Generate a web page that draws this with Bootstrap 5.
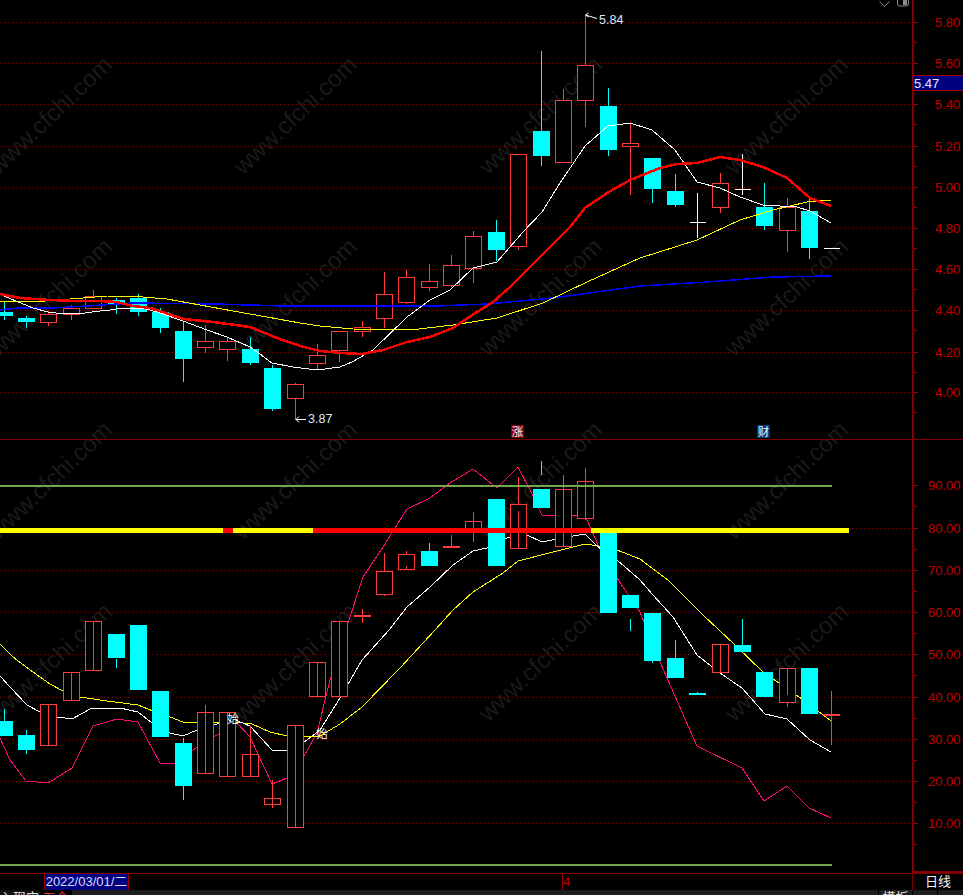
<!DOCTYPE html>
<html lang="zh">
<head>
<meta charset="utf-8">
<title>K线图</title>
<link rel="stylesheet" href="https://cdn.jsdelivr.net/npm/bootstrap@5.3.0/dist/css/bootstrap.min.css">
<style>
html,body{background:#000;margin:0;height:100%;overflow:hidden;font-family:"Liberation Sans","Noto Sans CJK SC",sans-serif}
.kpage{width:963px;height:895px}
.kmain{height:873px}
.kplot{width:912px;height:873px;display:block}
.kaxis{width:51px;height:873px;display:block}
.kplot text,.kaxis text{font-family:"Liberation Sans","Noto Sans CJK SC",sans-serif}
.wm{font-size:24px;fill:#1a1a1a}
.axl{font-size:13px;fill:#c00000}
.note{font-size:12.5px;fill:#dfe9f5}
.tag{font-size:11.5px;fill:#fff}
.kdate{height:17px;border-top:1px solid #800000;font-size:13px;line-height:15px}
.kstamp{margin-left:44px;width:85px;background:#000080;color:#d8def8;border-left:1px solid #a00000;border-right:1px solid #a00000;text-align:center;white-space:nowrap}
.kfour{margin-left:433px;width:350px;border-left:1px solid #a00000;color:#c00000;padding-left:0}
.kperiod{width:51px;border-left:1px solid #800000;color:#f2f6ff;text-align:center}
.ktabs{height:5px;background:#1e1e1e;font-size:13px;line-height:15px;color:#e6e6e6}
.ktab{padding-top:0;white-space:nowrap;height:5px;overflow:hidden}
.ktab-a{width:38px;background:#111;text-align:right}
.ktab-b{width:33px;background:#000;color:#e03030;text-align:center;margin-left:1px}
.ktab-c{margin-left:806px;width:35px;text-align:center;border-left:1px solid #000;border-right:1px solid #000}
.ktab-d{width:25px;border-right:1px solid #000}
</style>
</head>
<body>
<div class="kpage d-flex flex-column overflow-hidden">
  <div class="kmain d-flex">
    <svg class="kplot flex-shrink-0" id="plot" width="912" height="873" viewBox="0 0 912 873" xmlns="http://www.w3.org/2000/svg"></svg>
    <svg class="kaxis flex-shrink-0" id="axis" width="51" height="873" viewBox="912 0 51 873" xmlns="http://www.w3.org/2000/svg"></svg>
  </div>
  <div class="kdate d-flex">
    <div class="kstamp">2022/03/01/二</div>
    <div class="kfour">4</div>
    <div class="kperiod">日线</div>
  </div>
  <div class="ktabs d-flex">
    <div class="ktab ktab-a">入现实</div>
    <div class="ktab ktab-b">工仓</div>
    <div class="ktab ktab-c">模板</div>
    <div class="ktab ktab-d"></div>
  </div>
</div>
<script src="https://cdn.jsdelivr.net/npm/bootstrap@5.3.0/dist/js/bootstrap.bundle.min.js"></script>
<script>
var XS=[4,26,48,71,93,116,138,160,183,205,227,250,272,295,317,339,362,384,406,429,451,473,496,518,541,563,585,608,630,652,675,697,720,742,764,787,809,831];
var X=function(i){return XS[i]+0.5};
var RED='#ff3c3c',CY='#00ffff';
var out=[];
function ln(x1,y1,x2,y2,c,w,extra){out.push('<line x1="'+x1+'" y1="'+y1+'" x2="'+x2+'" y2="'+y2+'" stroke="'+c+'" stroke-width="'+(w||1)+'" shape-rendering="crispEdges" '+(extra||'')+'/>')}
function rc(x,y,w,h,f,s){out.push('<rect x="'+x+'" y="'+y+'" width="'+w+'" height="'+h+'" fill="'+f+'"'+(s?' stroke="'+s+'"':'')+' shape-rendering="crispEdges"/>')}
function poly(p,c,w){out.push('<polyline fill="none" stroke="'+c+'" stroke-width="'+w+'" stroke-linejoin="round" shape-rendering="crispEdges" points="'+p.map(function(a){return a.join(',')}).join(' ')+'"/>')}
function candle(d){var i=d[0],t=d[1],x=X(i),top=d[2],bot=d[3],segs=d.slice(4);
 var wc=(t==='c')?CY:(t==='d'?'#fff':RED);
 if(t==='c'){rc(x-8.5,top,17,bot-top,CY)}
 else if(t==='u'){rc(x-8,top+.5,16,bot-top-1,'#000',RED)}
 else if(t==='d'){ln(x-8,top+.5,x+8,top+.5,'#fff',1)}
 else if(t==='r'){rc(x-8.5,top,17,2,RED)}
 segs.forEach(function(s){ln(x,s[0],x,s[1],wc,1)});
}
/* watermark */
var rows=[115,297,480,662],cols=[50,295,540,786];
rows.forEach(function(y){cols.forEach(function(x){out.push('<text class="wm" text-anchor="middle" dominant-baseline="central" transform="translate('+x+' '+y+') rotate(-43.5)">www.cfchi.com</text>')})});
/* grid */
var DOT='stroke-dasharray="1 3"';
[22,63,104,146,187,228,269,310,352,392].forEach(function(y){ln(0,y+.5,912,y+.5,'#8c0000',1,DOT)});
[528,570,612,654,697,739,781,823].forEach(function(y){ln(0,y+.5,912,y+.5,'#8c0000',1,DOT)});
/* upper candles */
[
[0,'c',312,316,[302,312],[316,320]],[1,'c',318,322,[316,318],[322,328]],[2,'u',314,323,[311,314],[323,326]],
[3,'u',308,315,[305,308],[315,320]],[4,'u',296,309,[290,296]],[5,'c',300,304,[298,300],[304,314]],
[6,'c',298,312,[294,298],[312,316]],[7,'c',312,328,[308,312],[328,333]],[8,'c',331,359,[322,331],[359,382]],
[9,'u',341,348,[325,341],[348,353]],[10,'u',341,350,[338,341],[350,361]],[11,'c',349,363,[337,349],[363,365]],
[12,'c',368,409,[365,368],[409,411]],[13,'u',384,399,[383,384],[399,420]],[14,'u',355,364,[344,355],[364,370]],
[15,'u',331,351,[351,362]],[16,'u',327,332,[321,327],[332,337]],[17,'u',294,319,[272,294],[319,328]],
[18,'u',277,303,[270,277],[303,304]],[19,'u',281,288,[264,281],[288,291]],[20,'u',265,286,[255,265],[286,287]],
[21,'u',236,269,[231,236],[269,283]],[22,'c',232,250,[220,232],[250,261]],[23,'u',154,247,[247,250]],
[24,'c',131,156,[51,131],[156,166]],[25,'u',100,163,[89,100]],[26,'u',65,101,[15,65],[101,127]],
[27,'c',106,150,[88,106],[150,156]],[28,'u',143,147,[122,143],[147,195]],[29,'c',158,189,[189,203]],
[30,'c',191,205,[174,191],[205,207]],[31,'d',222,0,[193,238]],[32,'u',183,208,[173,183],[208,213]],
[33,'d',189,0,[154,195]],[34,'c',207,226,[183,207],[226,230]],[35,'u',207,231,[198,207],[231,252]],
[36,'c',211,248,[198,211],[248,259]],[37,'d',248,0]
].forEach(candle);
/* upper averages */
poly([[0,310],[17,308],[53,308],[87,306],[133,303],[217,304],[283,306],[320,306],[437,306],[487,304],[553,298],[640,286],[707,282],[773,277],[831,276]],'#0000ff',1.5);
poly([[0,301],[33,302],[83,298],[107,296],[143,297],[167,299],[200,305],[233,311],[267,317],[300,323],[320,326],[353,329],[410,330],[453,325],[497,318],[543,303],[587,282],[640,258],[697,240],[740,220],[773,210],[807,202],[831,200]],'#ffff00',1);
poly([[0,294],[11,299],[33,308],[48,312],[63,314],[85,313],[100,311],[110,310],[123,308],[143,308],[160,313],[183,321],[207,330],[227,337],[250,347],[260,354],[272,363],[293,367],[317,370],[340,367],[352,362],[373,350],[407,317],[430,300],[450,290],[473,268],[497,262],[523,232],[542,212],[560,183],[585,146],[608,126],[630,123],[652,130],[675,150],[697,182],[720,188],[740,197],[763,205],[797,207],[810,211],[831,223]],'#ffffff',1);
poly([[0,294],[20,298],[50,300],[77,301],[100,301],[117,302],[133,306],[150,308],[163,312],[183,319],[213,322],[250,327],[277,338],[300,346],[320,351],[340,353],[362,354],[383,350],[407,342],[430,337],[453,328],[477,312],[493,302],[510,287],[530,267],[550,247],[570,227],[585,208],[607,193],[630,180],[660,168],[677,164],[697,163],[720,157],[740,160],[763,167],[787,178],[810,198],[831,206]],'#ff0000',2.5);
/* lower averages */
poly([[0,738],[10,760],[26,781],[48,783],[72,768],[93,726],[117,719],[138,722],[160,763],[175,764],[197,747],[237,723],[250,737],[272,784],[287,778],[304,756],[317,733],[330,680],[348,623],[363,577],[383,547],[407,509],[430,498],[450,483],[473,469],[497,488],[518,467],[530,490],[542,515],[577,515],[587,520],[599,547],[617,578],[640,612],[660,662],[678,703],[697,746],[742,768],[764,801],[787,786],[809,808],[831,818]],'#ff0a78',1);
poly([[0,644],[13,657],[33,672],[50,684],[63,691],[80,697],[107,701],[138,705],[153,711],[170,717],[183,722],[213,723],[233,722],[252,724],[270,732],[287,736],[303,737],[320,736],[340,724],[362,707],[400,668],[435,630],[453,610],[473,592],[503,573],[518,561],[553,552],[585,544],[598,546],[617,550],[640,559],[668,580],[703,615],[735,645],[763,672],[802,699],[831,721]],'#ffff00',1);
poly([[0,676],[10,687],[27,705],[40,712],[57,717],[72,719],[92,708],[120,708],[138,712],[152,723],[170,733],[183,736],[197,730],[233,719],[250,726],[272,750],[287,750],[303,743],[320,730],[340,698],[362,660],[389,630],[407,607],[430,587],[453,565],[473,551],[487,548],[507,538],[527,535],[542,542],[557,539],[573,536],[585,534],[598,547],[617,560],[640,580],[653,595],[673,617],[697,655],[720,673],[742,688],[765,714],[787,719],[810,740],[831,752]],'#ffffff',1);
/* lower candles */
[
[0,'c',721,736,[709,721]],[1,'c',735,750,[730,735],[750,754]],[2,'u',704,746,[704,746]],[3,'u',672,701,[672,701]],
[4,'u',621,671,[621,671]],[5,'c',634,658,[659,668]],[6,'c',625,690],[7,'c',691,737],[8,'c',743,786,[738,743],[786,800]],
[9,'u',712,774,[705,774]],[10,'u',712,777,[712,777]],[11,'u',754,777,[726,777]],[12,'u',798,805,[780,808]],
[13,'u',725,828,[725,828]],[14,'u',662,697,[662,697]],[15,'u',621,697,[621,697]],[16,'r',615,0,[609,623]],
[17,'u',571,595,[553,571],[595,596]],[18,'u',554,570,[551,554],[566,570]],[19,'c',551,566,[543,551]],[20,'r',546,0,[535,547]],
[21,'u',521,532,[512,542]],[22,'c',499,566],[23,'u',504,549,[477,504],[511,549]],[24,'c',489,508,[461,475]],
[25,'u',489,547,[475,547]],[26,'u',481,519,[468,519]],[27,'c',530,613],[28,'c',595,608,[619,631]],
[29,'c',613,661,[661,663]],[30,'c',658,678,[640,658]],[31,'c',693,695,[692,693]],[32,'u',644,673,[644,673]],
[33,'c',645,652,[619,645]],[34,'c',672,697],[35,'u',668,703,[668,695],[703,707]],[36,'c',668,714],[37,'r',714,0,[691,745]]
].forEach(candle);
/* limit lines */
rc(0,485,832,2,'#70a850');rc(0,864,832,2,'#70a850');
/* status bar */
rc(0,528,223,5,'#ffff00');rc(223,528,10,5,'#ff0000');rc(233,528,80,5,'#ffff00');rc(313,528,278,5,'#ff0000');rc(591,528,258,5,'#ffff00');
/* panel divider */
ln(0,439.5,912,439.5,'#800000',1);
/* tags */
rc(511,425,13,13,'#800000');rc(757,425,13,13,'#003a70');
out.push('<text class="tag" x="517.5" y="436" text-anchor="middle">涨</text><text class="tag" x="763.5" y="436" text-anchor="middle">财</text>');
out.push('<text class="tag" x="233" y="723" text-anchor="middle">始</text><text class="tag" x="322" y="738" text-anchor="middle">始</text>');
/* extreme price notes */
out.push('<path d="M585.5 15 L597 18.5 M585.5 15 l3 -2 M585.5 15 l3 2" stroke="#fff" fill="none" stroke-width="1"/><text class="note" x="599" y="24">5.84</text>');
out.push('<path d="M296 419.5 H306 M296 419.5 l3 -3 M296 419.5 l3 3" stroke="#fff" fill="none" stroke-width="1"/><text class="note" x="308" y="423">3.87</text>');
/* toolbar marks */
out.push('<path d="M879.5 1.5 L884.5 6.5 L889.5 1.5" fill="none" stroke="#8a8a8a"/><path d="M897.5 0 V4 q0 2 2 2 H906.5 q2 0 2 -2 V0" fill="none" stroke="#8a8a8a"/><rect x="903" y="0" width="4" height="5" fill="#8a8a8a"/>');
document.getElementById('plot').innerHTML=out.join('');
/* axis */
out=[];
rc(912,0,2,872,'#800000');rc(912,871,51,2,'#800000');
var up=[['5.80',22],['5.60',63],['5.40',104],['5.20',146],['5.00',187],['4.80',228],['4.60',269],['4.40',310],['4.20',352],['4.00',392]];
up.forEach(function(a){rc(914,a[1],4,1,'#a00000');rc(914,a[1]+20,3,1,'#a00000');out.push('<text class="axl" x="935" y="'+(a[1]+5)+'">'+a[0]+'</text>')});
var lo=[['90.00',485],['80.00',528],['70.00',570],['60.00',612],['50.00',654],['40.00',697],['30.00',739],['20.00',781],['10.00',823]];
lo.forEach(function(a){rc(914,a[1],4,1,'#a00000');rc(914,a[1]+21,3,1,'#a00000');out.push('<text class="axl" x="928" y="'+(a[1]+5)+'">'+a[0]+'</text>')});
rc(912,439,51,1,'#800000');
rc(914,75,49,16,'#000080');rc(914,75,49,1,'#a00000');rc(914,90,49,1,'#a00000');
out.push('<text x="914" y="88" font-size="13" fill="#e6ecff">5.47</text>');
document.getElementById('axis').innerHTML=out.join('');
</script>
</body>
</html>
